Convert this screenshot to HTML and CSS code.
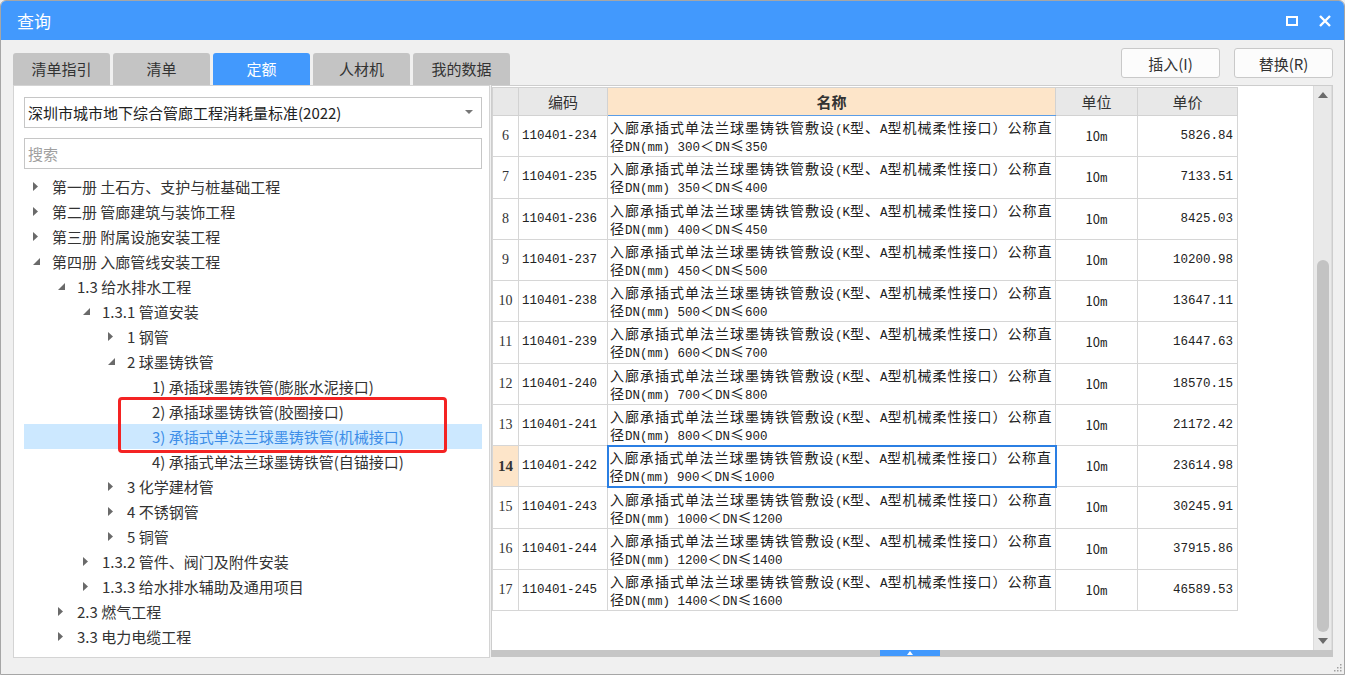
FILE: index.html
```html
<!DOCTYPE html>
<html lang="zh-CN">
<head>
<meta charset="utf-8">
<title>查询</title>
<link rel="stylesheet" href="styles.css">
</head>
<body>
<div class="window">
  <div class="titlebar">
    <span class="title">查询</span>
    <div class="winbtns">
      <svg width="12" height="10" viewBox="0 0 12 10"><rect x="1" y="1" width="10" height="8" fill="none" stroke="#fff" stroke-width="2"/></svg>
      <svg width="12" height="12" viewBox="0 0 12 12"><path d="M1 1L11 11M11 1L1 11" stroke="#fff" stroke-width="2.4"/></svg>
    </div>
  </div>
  <div class="body">
    <div class="toprow">
      <div class="tabs">
        <div class="tab">清单指引</div>
        <div class="tab">清单</div>
        <div class="tab active">定额</div>
        <div class="tab">人材机</div>
        <div class="tab">我的数据</div>
      </div>
      <div class="actions">
        <button class="btn">插入(I)</button>
        <button class="btn">替换(R)</button>
      </div>
    </div>
    <div class="main">
      <div class="left">
        <div class="select">
          <span>深圳市城市地下综合管廊工程消耗量标准(2022)</span>
          <svg width="8" height="5" viewBox="0 0 8 5"><path d="M0 0H8L4 4Z" fill="#777"/></svg>
        </div>
        <div class="search">搜索</div>
        <div class="tree">
          <div class="node l0"><span class="tw"><svg width="6" height="9" viewBox="0 0 6 9"><path d="M0 0L5 4.5L0 9Z"/></svg></span>第一册 土石方、支护与桩基础工程</div>
          <div class="node l0"><span class="tw"><svg width="6" height="9" viewBox="0 0 6 9"><path d="M0 0L5 4.5L0 9Z"/></svg></span>第二册 管廊建筑与装饰工程</div>
          <div class="node l0"><span class="tw"><svg width="6" height="9" viewBox="0 0 6 9"><path d="M0 0L5 4.5L0 9Z"/></svg></span>第三册 附属设施安装工程</div>
          <div class="node l0"><span class="tw"><svg width="7" height="7" viewBox="0 0 7 7"><path d="M7 0V7H0Z"/></svg></span>第四册 入廊管线安装工程</div>
          <div class="node l1"><span class="tw"><svg width="7" height="7" viewBox="0 0 7 7"><path d="M7 0V7H0Z"/></svg></span>1.3 给水排水工程</div>
          <div class="node l2"><span class="tw"><svg width="7" height="7" viewBox="0 0 7 7"><path d="M7 0V7H0Z"/></svg></span>1.3.1 管道安装</div>
          <div class="node l3"><span class="tw"><svg width="6" height="9" viewBox="0 0 6 9"><path d="M0 0L5 4.5L0 9Z"/></svg></span>1 钢管</div>
          <div class="node l3"><span class="tw"><svg width="7" height="7" viewBox="0 0 7 7"><path d="M7 0V7H0Z"/></svg></span>2 球墨铸铁管</div>
          <div class="node l4"><span class="tw"></span>1) 承插球墨铸铁管(膨胀水泥接口)</div>
          <div class="node l4"><span class="tw"></span>2) 承插球墨铸铁管(胶圈接口)</div>
          <div class="node l4 sel"><span class="tw"></span>3) 承插式单法兰球墨铸铁管(机械接口)</div>
          <div class="node l4"><span class="tw"></span>4) 承插式单法兰球墨铸铁管(自锚接口)</div>
          <div class="node l3"><span class="tw"><svg width="6" height="9" viewBox="0 0 6 9"><path d="M0 0L5 4.5L0 9Z"/></svg></span>3 化学建材管</div>
          <div class="node l3"><span class="tw"><svg width="6" height="9" viewBox="0 0 6 9"><path d="M0 0L5 4.5L0 9Z"/></svg></span>4 不锈钢管</div>
          <div class="node l3"><span class="tw"><svg width="6" height="9" viewBox="0 0 6 9"><path d="M0 0L5 4.5L0 9Z"/></svg></span>5 铜管</div>
          <div class="node l2"><span class="tw"><svg width="6" height="9" viewBox="0 0 6 9"><path d="M0 0L5 4.5L0 9Z"/></svg></span>1.3.2 管件、阀门及附件安装</div>
          <div class="node l2"><span class="tw"><svg width="6" height="9" viewBox="0 0 6 9"><path d="M0 0L5 4.5L0 9Z"/></svg></span>1.3.3 给水排水辅助及通用项目</div>
          <div class="node l1"><span class="tw"><svg width="6" height="9" viewBox="0 0 6 9"><path d="M0 0L5 4.5L0 9Z"/></svg></span>2.3 燃气工程</div>
          <div class="node l1"><span class="tw"><svg width="6" height="9" viewBox="0 0 6 9"><path d="M0 0L5 4.5L0 9Z"/></svg></span>3.3 电力电缆工程</div>
          <div class="mark"></div>
        </div>
      </div>
      <div class="right">
        <div class="grid-area">
          <div class="tablewrap">
            <table class="grid">
              <colgroup><col class="c-rh"><col class="c-code"><col class="c-name"><col class="c-unit"><col class="c-price"></colgroup>
              <thead>
                <tr><th></th><th>编码</th><th class="hname">名称</th><th>单位</th><th>单价</th></tr>
              </thead>
              <tbody>
                <tr><td class="rh">6</td><td class="code">110401-234</td><td class="name"><div class="ln">入廊承插式单法兰球墨铸铁管敷设<span class="m">(K</span>型、<span class="m">A</span>型机械柔性接口）公称直</div><div class="ln">径<span class="m">DN(mm) 300</span>＜<span class="m">DN</span>≤<span class="m">350</span></div></td><td class="unit">10<span class="m">m</span></td><td class="price">5826.84</td></tr>
                <tr><td class="rh">7</td><td class="code">110401-235</td><td class="name"><div class="ln">入廊承插式单法兰球墨铸铁管敷设<span class="m">(K</span>型、<span class="m">A</span>型机械柔性接口）公称直</div><div class="ln">径<span class="m">DN(mm) 350</span>＜<span class="m">DN</span>≤<span class="m">400</span></div></td><td class="unit">10<span class="m">m</span></td><td class="price">7133.51</td></tr>
                <tr><td class="rh">8</td><td class="code">110401-236</td><td class="name"><div class="ln">入廊承插式单法兰球墨铸铁管敷设<span class="m">(K</span>型、<span class="m">A</span>型机械柔性接口）公称直</div><div class="ln">径<span class="m">DN(mm) 400</span>＜<span class="m">DN</span>≤<span class="m">450</span></div></td><td class="unit">10<span class="m">m</span></td><td class="price">8425.03</td></tr>
                <tr><td class="rh">9</td><td class="code">110401-237</td><td class="name"><div class="ln">入廊承插式单法兰球墨铸铁管敷设<span class="m">(K</span>型、<span class="m">A</span>型机械柔性接口）公称直</div><div class="ln">径<span class="m">DN(mm) 450</span>＜<span class="m">DN</span>≤<span class="m">500</span></div></td><td class="unit">10<span class="m">m</span></td><td class="price">10200.98</td></tr>
                <tr><td class="rh">10</td><td class="code">110401-238</td><td class="name"><div class="ln">入廊承插式单法兰球墨铸铁管敷设<span class="m">(K</span>型、<span class="m">A</span>型机械柔性接口）公称直</div><div class="ln">径<span class="m">DN(mm) 500</span>＜<span class="m">DN</span>≤<span class="m">600</span></div></td><td class="unit">10<span class="m">m</span></td><td class="price">13647.11</td></tr>
                <tr><td class="rh">11</td><td class="code">110401-239</td><td class="name"><div class="ln">入廊承插式单法兰球墨铸铁管敷设<span class="m">(K</span>型、<span class="m">A</span>型机械柔性接口）公称直</div><div class="ln">径<span class="m">DN(mm) 600</span>＜<span class="m">DN</span>≤<span class="m">700</span></div></td><td class="unit">10<span class="m">m</span></td><td class="price">16447.63</td></tr>
                <tr><td class="rh">12</td><td class="code">110401-240</td><td class="name"><div class="ln">入廊承插式单法兰球墨铸铁管敷设<span class="m">(K</span>型、<span class="m">A</span>型机械柔性接口）公称直</div><div class="ln">径<span class="m">DN(mm) 700</span>＜<span class="m">DN</span>≤<span class="m">800</span></div></td><td class="unit">10<span class="m">m</span></td><td class="price">18570.15</td></tr>
                <tr><td class="rh">13</td><td class="code">110401-241</td><td class="name"><div class="ln">入廊承插式单法兰球墨铸铁管敷设<span class="m">(K</span>型、<span class="m">A</span>型机械柔性接口）公称直</div><div class="ln">径<span class="m">DN(mm) 800</span>＜<span class="m">DN</span>≤<span class="m">900</span></div></td><td class="unit">10<span class="m">m</span></td><td class="price">21172.42</td></tr>
                <tr class="cur"><td class="rh">14</td><td class="code">110401-242</td><td class="name"><div class="ln">入廊承插式单法兰球墨铸铁管敷设<span class="m">(K</span>型、<span class="m">A</span>型机械柔性接口）公称直</div><div class="ln">径<span class="m">DN(mm) 900</span>＜<span class="m">DN</span>≤<span class="m">1000</span></div></td><td class="unit">10<span class="m">m</span></td><td class="price">23614.98</td></tr>
                <tr><td class="rh">15</td><td class="code">110401-243</td><td class="name"><div class="ln">入廊承插式单法兰球墨铸铁管敷设<span class="m">(K</span>型、<span class="m">A</span>型机械柔性接口）公称直</div><div class="ln">径<span class="m">DN(mm) 1000</span>＜<span class="m">DN</span>≤<span class="m">1200</span></div></td><td class="unit">10<span class="m">m</span></td><td class="price">30245.91</td></tr>
                <tr><td class="rh">16</td><td class="code">110401-244</td><td class="name"><div class="ln">入廊承插式单法兰球墨铸铁管敷设<span class="m">(K</span>型、<span class="m">A</span>型机械柔性接口）公称直</div><div class="ln">径<span class="m">DN(mm) 1200</span>＜<span class="m">DN</span>≤<span class="m">1400</span></div></td><td class="unit">10<span class="m">m</span></td><td class="price">37915.86</td></tr>
                <tr><td class="rh">17</td><td class="code">110401-245</td><td class="name"><div class="ln">入廊承插式单法兰球墨铸铁管敷设<span class="m">(K</span>型、<span class="m">A</span>型机械柔性接口）公称直</div><div class="ln">径<span class="m">DN(mm) 1400</span>＜<span class="m">DN</span>≤<span class="m">1600</span></div></td><td class="unit">10<span class="m">m</span></td><td class="price">46589.53</td></tr>
              </tbody>
            </table>
          </div>
          <div class="vscroll">
            <div class="arrow"><svg width="10" height="6" viewBox="0 0 10 6"><path d="M0 6L5 0L10 6Z" fill="#6b6b6b"/></svg></div>
            <div class="track-space"></div>
            <div class="thumb"></div>
            <div class="arrow"><svg width="10" height="6" viewBox="0 0 10 6"><path d="M0 0L5 6L10 0Z" fill="#6b6b6b"/></svg></div>
          </div>
        </div>
        <div class="splitter">
          <div class="handle"><svg width="6" height="4" viewBox="0 0 6 4"><path d="M0 4L3 0L6 4Z" fill="#fff"/></svg></div>
        </div>
      </div>
    </div>
  </div>
  <svg class="grip" width="9" height="9" viewBox="0 0 9 9" fill="#a0a0a0">
    <rect x="7" y="1" width="1.5" height="1.5"/><rect x="4" y="4" width="1.5" height="1.5"/><rect x="7" y="4" width="1.5" height="1.5"/>
    <rect x="1" y="7" width="1.5" height="1.5"/><rect x="4" y="7" width="1.5" height="1.5"/><rect x="7" y="7" width="1.5" height="1.5"/>
  </svg>
</div>
</body>
</html>
```

FILE: styles.css
```css
* { box-sizing: border-box; }
html, body { margin: 0; padding: 0; }
body {
  width: 1345px;
  height: 675px;
  overflow: hidden;
  background: #f0f0f0;
  font-family: "Noto Sans CJK SC", "Noto Sans", sans-serif;
  color: #333;
}
.window {
  position: relative;
  width: 1345px;
  height: 675px;
  border: 1px solid #a6a6a6;
  border-radius: 6px 6px 0 0;
  background: #f0f0f0;
  overflow: hidden;
  display: flex;
  flex-direction: column;
}
.titlebar {
  height: 39px;
  flex: none;
  background: #4299fd;
  color: #fff;
  display: flex;
  align-items: center;
  justify-content: space-between;
  padding: 0 13px 0 16px;
}
.title { font-size: 17px; line-height: 20px; }
.winbtns { display: flex; align-items: center; gap: 21px; }
.winbtns svg { display: block; }

.body {
  flex: 1;
  display: flex;
  flex-direction: column;
  padding: 0 11px 0 12px;
}
.toprow {
  height: 45px;
  flex: none;
  display: flex;
  justify-content: space-between;
}
.tabs { display: flex; align-items: flex-end; gap: 3px; }
.tab {
  width: 97px;
  height: 32px;
  background: #c4c4c4;
  border-radius: 3px 3px 0 0;
  font-size: 15px;
  line-height: 32px;
  text-align: center;
  color: #333;
}
.tab.active { background: #4299fd; color: #fff; }
.actions { display: flex; gap: 14px; padding-top: 8px; }
.btn {
  width: 99px;
  height: 30px;
  background: #fcfcfc;
  border: 1px solid #c9c9c9;
  border-radius: 3px;
  font-family: "Noto Sans CJK SC", "Noto Sans", sans-serif;
  font-size: 15px;
  color: #333;
  padding: 0;
}

.main {
  height: 573px;
  flex: none;
  display: flex;
}
.left {
  width: 477px;
  flex: none;
  background: #fff;
  border: 1px solid #d4d4d4;
  padding: 11px 7px 0 10px;
}
.select {
  height: 31px;
  border: 1px solid #c6c6c6;
  display: flex;
  align-items: center;
  justify-content: space-between;
  padding: 0 8px 0 3px;
  font-size: 15px;
  color: #222;
}
.search {
  height: 31px;
  margin-top: 10px;
  border: 1px solid #c6c6c6;
  padding-left: 3px;
  font-size: 15px;
  line-height: 29px;
  color: #a0a0a0;
}
.tree { position: relative; margin-top: 5px; }
.node {
  height: 25px;
  display: flex;
  align-items: center;
  font-size: 15px;
  color: #333;
  white-space: nowrap;
}
.tw {
  width: 19px;
  margin-left: 9px;
  flex: none;
  display: flex;
  align-items: center;
}
.tw svg { fill: #6a6a6a; display: block; }
.l1 { padding-left: 25px; }
.l2 { padding-left: 50px; }
.l3 { padding-left: 75px; }
.l4 { padding-left: 100px; }
.node.sel { background: #cce8ff; color: #3d8ee8; }
.mark {
  position: absolute;
  left: 94px;
  top: 223px;
  width: 329px;
  height: 56px;
  border: 3px solid #f42323;
  border-radius: 4px;
}

.right {
  flex: 1;
  margin-left: 1px;
  display: flex;
  flex-direction: column;
}
.grid-area {
  flex: 1;
  display: flex;
  background: #fff;
  border: 1px solid #cdcdcd;
  border-bottom: none;
}
.tablewrap {
  flex: 1;
  padding-top: 1px;
  overflow: hidden;
}
.grid {
  border-collapse: collapse;
  table-layout: fixed;
  width: 745px;
  font-size: 14px;
}
.c-rh { width: 26px; }
.c-code { width: 89px; }
.c-name { width: 448px; }
.c-unit { width: 82px; }
.c-price { width: 100px; }
.grid th {
  height: 28px;
  background: #e8e8e8;
  border: 1px solid #d2d2d2;
  font-weight: normal;
  font-size: 15px;
  line-height: 20px;
  color: #333;
  padding: 0;
}
.grid th.hname {
  background: #fde5c9;
  font-weight: bold;
  border-bottom: 1px solid #5b9de6;
}
.grid td {
  height: 41.25px;
  border: 1px solid #d6d6d6;
  padding: 0;
  color: #222;
  white-space: nowrap;
  overflow: hidden;
  line-height: 18px;
}
.grid td.rh {
  font-family: "Liberation Serif", serif;
  font-size: 14px;
  text-align: center;
  color: #333;
}
.grid tr.cur td.rh { background: #fde5c9; font-weight: bold; font-size: 15px; }
.grid td.code {
  font-family: "Liberation Mono", monospace;
  font-size: 12.5px;
  padding-left: 3px;
}
.grid td.name {
  font-size: 14px;
  letter-spacing: 1px;
  padding-left: 2px;
}
.ln {
  height: 18px;
  line-height: 18px;
  overflow: visible;
}
.grid tr.cur td.name { border: 2px solid #2b7fe3; padding-left: 1px; }
.m {
  font-family: "Liberation Mono", monospace;
  font-size: 12.5px;
  letter-spacing: 0;
  line-height: 1;
}
.grid td.unit { text-align: center; font-size: 13px; }
.grid td.price {
  font-family: "Liberation Mono", monospace;
  font-size: 12.5px;
  text-align: right;
  padding-right: 4px;
}

.vscroll {
  width: 19px;
  flex: none;
  background: #e9e9e9;
  border-left: 1px solid #dcdcdc;
  border-right: 1px solid #dcdcdc;
  display: flex;
  flex-direction: column;
  align-items: center;
}
.arrow {
  height: 18px;
  flex: none;
  display: flex;
  align-items: center;
  justify-content: center;
}
.arrow svg { display: block; }
.track-space { flex: 1; }
.thumb {
  width: 12px;
  height: 372px;
  flex: none;
  background: #c3c3c3;
  border-radius: 6px;
}
.splitter {
  height: 7px;
  flex: none;
  background: #c6c6c6;
  display: flex;
  justify-content: center;
  margin-bottom: 1px;
}
.handle {
  width: 60px;
  height: 6px;
  background: #4299fd;
  margin-left: -4px;
  display: flex;
  align-items: center;
  justify-content: center;
}
.handle svg { display: block; }
.grip {
  position: absolute;
  right: 2px;
  bottom: 2px;
}
```
